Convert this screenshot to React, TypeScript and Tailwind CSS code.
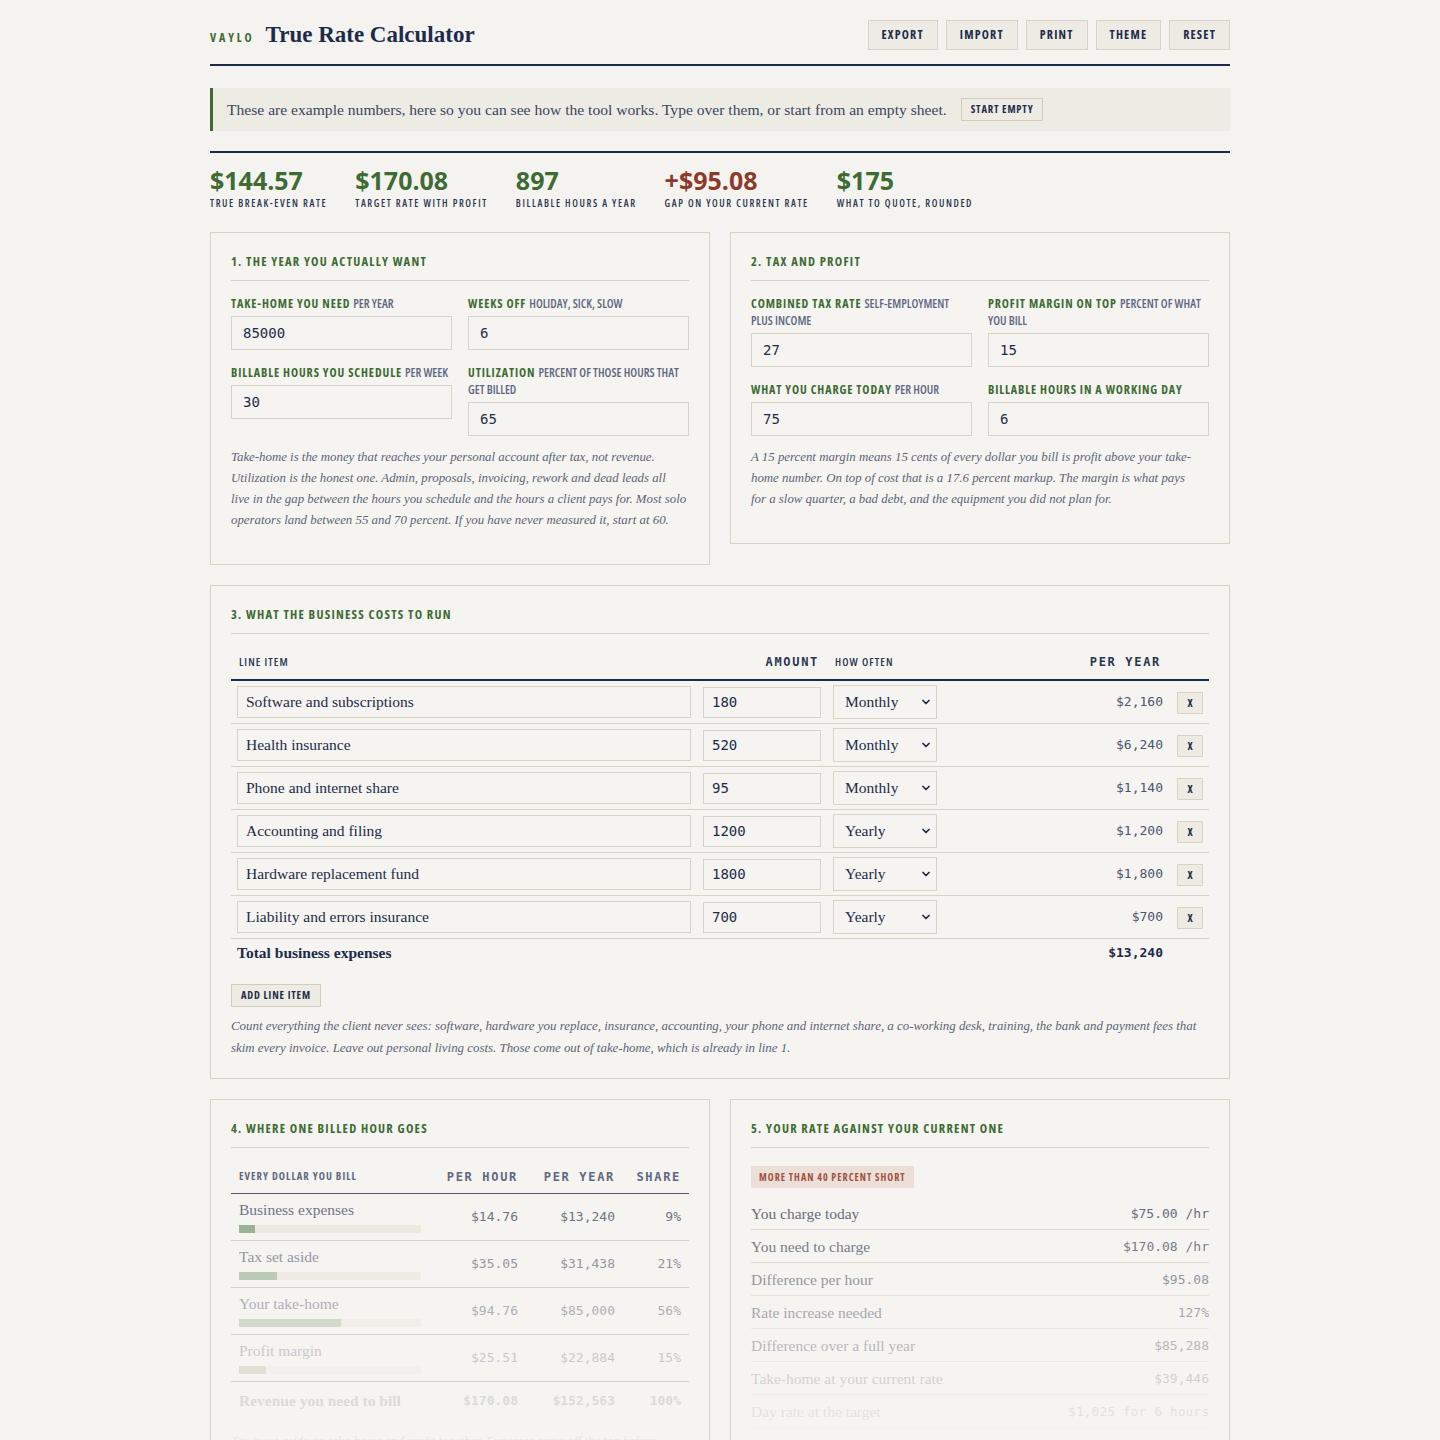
import { useState } from 'react';
import { ChevronDown } from 'lucide-react';

type Freq = 'Monthly' | 'Yearly';
type LineItem = { id: number; name: string; amount: string; freq: Freq };

const sans = "font-['Open_Sans',sans-serif] font-stretch-condensed";
const sansStat = "font-['Open_Sans',sans-serif]";
const serif = "font-['Liberation_Serif',serif]";
const mono = "font-['DejaVu_Sans_Mono',monospace]";

const startingItems: LineItem[] = [
  { id: 1, name: 'Software and subscriptions', amount: '180', freq: 'Monthly' },
  { id: 2, name: 'Health insurance', amount: '520', freq: 'Monthly' },
  { id: 3, name: 'Phone and internet share', amount: '95', freq: 'Monthly' },
  { id: 4, name: 'Accounting and filing', amount: '1200', freq: 'Yearly' },
  { id: 5, name: 'Hardware replacement fund', amount: '1800', freq: 'Yearly' },
  { id: 6, name: 'Liability and errors insurance', amount: '700', freq: 'Yearly' },
];

const stats = [
  { value: '$144.57', label: 'True break-even rate', tone: 'text-[#3e6b34]' },
  { value: '$170.08', label: 'Target rate with profit', tone: 'text-[#3e6b34]' },
  { value: '897', label: 'Billable hours a year', tone: 'text-[#3e6b34]' },
  { value: '+$95.08', label: 'Gap on your current rate', tone: 'text-[#8c3a2a]' },
  { value: '$175', label: 'What to quote, rounded', tone: 'text-[#3e6b34]' },
];

const breakdown = [
  { label: 'Business expenses', hour: '$14.76', year: '$13,240', share: 9, bar: 'bg-[#7f9c76]', fade: 'opacity-75' },
  { label: 'Tax set aside', hour: '$35.05', year: '$31,438', share: 21, bar: 'bg-[#8fab86]', fade: 'opacity-55' },
  { label: 'Your take-home', hour: '$94.76', year: '$85,000', share: 56, bar: 'bg-[#9fb896]', fade: 'opacity-40' },
  { label: 'Profit margin', hour: '$25.51', year: '$22,884', share: 15, bar: 'bg-[#a99f8a]', fade: 'opacity-25' },
];

const comparison = [
  { label: 'You charge today', value: '$75.00 /hr', fade: 'opacity-80' },
  { label: 'You need to charge', value: '$170.08 /hr', fade: 'opacity-70' },
  { label: 'Difference per hour', value: '$95.08', fade: 'opacity-55' },
  { label: 'Rate increase needed', value: '127%', fade: 'opacity-45' },
  { label: 'Difference over a full year', value: '$85,288', fade: 'opacity-35' },
  { label: 'Take-home at your current rate', value: '$39,446', fade: 'opacity-20' },
  { label: 'Day rate at the target', value: '$1,025 for 6 hours', fade: 'opacity-10' },
];

function formatMoney(n: number) {
  return '$' + n.toLocaleString('en-US');
}

function yearly(item: LineItem) {
  const amount = Number(item.amount) || 0;
  return item.freq === 'Monthly' ? amount * 12 : amount;
}

function Field({ label, hint, value }: { label: string; hint?: string; value: string }) {
  return (
    <label className="block">
      <span className={`block text-[12px] font-bold uppercase leading-[17px] tracking-[0.075em] text-[#3e6b34] ${sans}`}>
        {label}
        {hint && <span className="ml-[3px] font-semibold tracking-normal text-[#5d6782]">{hint}</span>}
      </span>
      <input
        defaultValue={value}
        className={`mt-[4px] block h-[34px] w-full border border-[#d9d3c6] bg-[#f5f4f0] px-[11px] text-[14px] text-[#1c2b4a] outline-none ${mono}`}
      />
    </label>
  );
}

function SectionTitle({ children }: { children: string }) {
  return (
    <h2 className={`border-b border-[#d9d3c6] pb-[10px] text-[12.5px] font-bold uppercase leading-[17px] tracking-[0.1em] text-[#3e6b34] ${sans}`}>
      {children}
    </h2>
  );
}

function SmallButton({ children, onClick }: { children: string; onClick?: () => void }) {
  return (
    <button
      type="button"
      onClick={onClick}
      className={`h-[23px] border border-[#d3ccbd] bg-[#edebe3] px-[9px] text-[10.5px] font-bold uppercase tracking-[0.08em] text-[#1c2b4a] ${sans}`}
    >
      {children}
    </button>
  );
}

export default function App() {
  const [items, setItems] = useState<LineItem[]>(startingItems);
  const total = items.reduce((sum, item) => sum + yearly(item), 0);

  const updateItem = (id: number, patch: Partial<LineItem>) => {
    setItems((current) => current.map((item) => (item.id === id ? { ...item, ...patch } : item)));
  };

  return (
    <div className={`min-h-screen bg-[#f4f3ef] pb-10 text-[#1c2b4a] ${serif}`}>
      <div className="mx-auto w-[1020px]">
        <header className="flex items-center justify-between border-b-2 border-[#1c2b4a] pb-[14px] pt-5">
          <div className="flex items-baseline gap-[11px]">
            <span className={`text-[12px] font-bold tracking-[0.24em] text-[#3e6b34] ${sans}`}>VAYLO</span>
            <h1 className="text-[23px] font-bold leading-[30px] text-[#1c2b4a]">True Rate Calculator</h1>
          </div>
          <div className="flex gap-2">
            {['Export', 'Import', 'Print', 'Theme', 'Reset'].map((label) => (
              <button
                key={label}
                type="button"
                className={`h-[30px] border border-[#d9d3c6] bg-[#edebe3] px-[13px] text-[12px] font-bold uppercase leading-none tracking-[0.1em] text-[#1c2b4a] ${sans}`}
                onClick={label === 'Reset' ? () => setItems(startingItems) : undefined}
              >
                {label}
              </button>
            ))}
          </div>
        </header>

        <div className="mt-[22px] flex h-[43px] items-center gap-[14px] border-l-[3px] border-[#3e6b34] bg-[#ecebe4] pl-[14px]">
          <p className="text-[15.6px] text-[#3a4660]">
            These are example numbers, here so you can see how the tool works. Type over them, or start from an empty sheet.
          </p>
          <SmallButton onClick={() => setItems([])}>Start empty</SmallButton>
        </div>

        <div className="mt-5 flex gap-7 border-t-2 border-[#1c2b4a] pt-[12px]">
          {stats.map((stat) => (
            <div key={stat.label}>
              <div className={`text-[25px] font-bold leading-[30px] ${stat.tone} ${sansStat}`}>{stat.value}</div>
              <div className={`mt-[1px] text-[10px] font-semibold uppercase tracking-[0.16em] text-[#2a3550] ${sans}`}>{stat.label}</div>
            </div>
          ))}
        </div>

        <div className="mt-[21px] grid grid-cols-2 items-start gap-5">
          <section className="border border-[#d9d3c6] bg-[#f5f4f0] px-5 pb-[33px] pt-5">
            <SectionTitle>1. The year you actually want</SectionTitle>
            <div className="mt-[14px] grid grid-cols-2 gap-x-4 gap-y-[14px]">
              <Field label="Take-home you need" hint="per year" value="85000" />
              <Field label="Weeks off" hint="holiday, sick, slow" value="6" />
              <Field label="Billable hours you schedule" hint="per week" value="30" />
              <Field label="Utilization" hint="percent of those hours that get billed" value="65" />
            </div>
            <p className="mt-[11px] text-[12.85px] italic leading-[21px] text-[#5b6478]">
              Take-home is the money that reaches your personal account after tax, not revenue. Utilization is the honest one. Admin, proposals, invoicing, rework and dead leads all
              <br />
              live in the gap between the hours you schedule and the hours a client pays for. Most solo operators land between 55 and 70 percent. If you have never measured it, start at 60.
            </p>
          </section>

          <section className="border border-[#d9d3c6] bg-[#f5f4f0] px-5 pb-[33px] pt-5">
            <SectionTitle>2. Tax and profit</SectionTitle>
            <div className="mt-[14px] grid grid-cols-2 gap-x-4 gap-y-[14px]">
              <Field label="Combined tax rate" hint="self-employment plus income" value="27" />
              <Field label="Profit margin on top" hint="percent of what you bill" value="15" />
              <Field label="What you charge today" hint="per hour" value="75" />
              <Field label="Billable hours in a working day" value="6" />
            </div>
            <p className="mt-[11px] max-w-[448px] text-[12.85px] italic leading-[21px] text-[#5b6478]">
              A 15 percent margin means 15 cents of every dollar you bill is profit above your take-home number. On top of cost that is a 17.6 percent markup. The margin is what pays for a slow quarter, a bad debt, and the equipment you did not plan for.
            </p>
          </section>
        </div>

        <section className="mt-5 border border-[#d9d3c6] bg-[#f5f4f0] px-5 pb-[19px] pt-5">
          <SectionTitle>3. What the business costs to run</SectionTitle>
          <table className="mt-[11px] w-full table-fixed border-collapse">
            <thead>
              <tr className="border-b-2 border-[#1c2b4a]">
                <th className={`h-[35px] w-[466px] px-2 text-left text-[11px] font-semibold uppercase tracking-[0.1em] text-[#2a3550] ${sans}`}>Line item</th>
                <th className={`w-[130px] px-2 text-right text-[12px] font-bold uppercase tracking-[0.14em] text-[#2a3550] ${mono}`}>Amount</th>
                <th className={`w-[116px] px-2 text-left text-[11px] font-semibold uppercase tracking-[0.1em] text-[#2a3550] ${sans}`}>How often</th>
                <th className={`px-2 text-right text-[12px] font-bold uppercase tracking-[0.14em] text-[#2a3550] ${mono}`}>Per year</th>
                <th className="w-10" />
              </tr>
            </thead>
            <tbody>
              {items.map((item) => (
                <tr key={item.id} className="border-b border-[#d9d3c6]">
                  <td className="px-[6px] py-1">
                    <input
                      value={item.name}
                      onChange={(e) => updateItem(item.id, { name: e.target.value })}
                      className="block h-[32px] w-full border border-[#d9d3c6] bg-[#f5f4f0] px-2 text-[15.5px] text-[#1c2b4a] outline-none"
                    />
                  </td>
                  <td className="px-[6px] py-1">
                    <input
                      value={item.amount}
                      onChange={(e) => updateItem(item.id, { amount: e.target.value })}
                      className={`block h-[31px] w-full border border-[#d9d3c6] bg-[#f5f4f0] px-2 text-[14px] text-[#1c2b4a] outline-none ${mono}`}
                    />
                  </td>
                  <td className="px-[6px] py-1">
                    <div className="relative">
                      <select
                        value={item.freq}
                        onChange={(e) => updateItem(item.id, { freq: e.target.value as Freq })}
                        className="block h-[34px] w-full appearance-none border border-[#d9d3c6] bg-[#f5f4f0] pl-[11px] text-[15.5px] text-[#1c2b4a] outline-none"
                      >
                        <option>Monthly</option>
                        <option>Yearly</option>
                      </select>
                      <ChevronDown size={12} strokeWidth={3.5} className="pointer-events-none absolute right-[5px] top-[11px] text-[#1c2b4a]" />
                    </div>
                  </td>
                  <td className={`px-[6px] py-1 text-right text-[13px] text-[#4b5570] ${mono}`}>{formatMoney(yearly(item))}</td>
                  <td className="py-1 pl-2">
                    <button
                      type="button"
                      onClick={() => setItems((current) => current.filter((row) => row.id !== item.id))}
                      className={`h-[22px] w-[26px] border border-[#d9d3c6] bg-[#edebe3] text-[11px] font-bold text-[#1c2b4a] ${sans}`}
                    >
                      X
                    </button>
                  </td>
                </tr>
              ))}
              <tr>
                <td className="px-[6px] pb-1 pt-[2px] text-[15.5px] font-bold text-[#1c2b4a]">Total business expenses</td>
                <td />
                <td />
                <td className={`px-[6px] pb-1 pt-[2px] text-right text-[13px] font-bold text-[#1c2b4a] ${mono}`}>{formatMoney(total)}</td>
                <td />
              </tr>
            </tbody>
          </table>
          <div className="mt-4 flex">
            <SmallButton
              onClick={() =>
                setItems((current) => [...current, { id: Date.now(), name: '', amount: '0', freq: 'Monthly' }])
              }
            >
              Add line item
            </SmallButton>
          </div>
          <p className="mt-2 text-[12.9px] italic leading-[22px] text-[#5b6478]">
            Count everything the client never sees: software, hardware you replace, insurance, accounting, your phone and internet share, a co-working desk, training, the bank and payment fees that skim every invoice. Leave out personal living costs. Those come out of take-home, which is already in line 1.
          </p>
        </section>

        <div className="mt-5 grid grid-cols-2 items-start gap-5">
          <section className="border border-[#d9d3c6] bg-[#f5f4f0] p-5">
            <SectionTitle>4. Where one billed hour goes</SectionTitle>
            <table className="mt-3 w-full table-fixed border-collapse">
              <thead>
                <tr className="border-b border-[#4a5877] text-[#5f6880]">
                  <th className={`h-[33px] w-[200px] px-2 text-left text-[10.5px] font-bold uppercase tracking-[0.1em] ${sans}`}>Every dollar you bill</th>
                  <th className={`w-[95px] px-2 text-right text-[12px] font-bold uppercase tracking-[0.14em] ${mono}`}>Per hour</th>
                  <th className={`w-[97px] px-2 text-right text-[12px] font-bold uppercase tracking-[0.14em] ${mono}`}>Per year</th>
                  <th className={`px-2 text-right text-[12px] font-bold uppercase tracking-[0.14em] ${mono}`}>Share</th>
                </tr>
              </thead>
              <tbody>
                {breakdown.map((row) => (
                  <tr key={row.label} className={`border-b border-[#d9d3c6] text-[#3f4a63] ${row.fade}`}>
                    <td className="px-2 pb-[7px] pt-[6px]">
                      <div className="text-[15.5px] leading-[20px]">{row.label}</div>
                      <div className="mt-[5px] h-2 w-[182px] bg-[#e9e6dd]">
                        <div className={`h-2 ${row.bar}`} style={{ width: `${row.share}%` }} />
                      </div>
                    </td>
                    <td className={`px-2 text-right text-[13px] ${mono}`}>{row.hour}</td>
                    <td className={`px-2 text-right text-[13px] ${mono}`}>{row.year}</td>
                    <td className={`px-2 text-right text-[13px] ${mono}`}>{row.share}%</td>
                  </tr>
                ))}
                <tr className="text-[#3f4a63] opacity-15">
                  <td className="px-2 py-[7px] text-[15.5px] font-bold">Revenue you need to bill</td>
                  <td className={`px-2 text-right text-[13px] font-bold ${mono}`}>$170.08</td>
                  <td className={`px-2 text-right text-[13px] font-bold ${mono}`}>$152,563</td>
                  <td className={`px-2 text-right text-[13px] font-bold ${mono}`}>100%</td>
                </tr>
              </tbody>
            </table>
            <p className="mt-3 text-[12.85px] italic leading-[21px] text-[#5b6478] opacity-10">
              Tax is set aside on take-home and profit together. Expenses come off the top before anything else.
            </p>
          </section>

          <section className="border border-[#d9d3c6] bg-[#f5f4f0] p-5">
            <SectionTitle>5. Your rate against your current one</SectionTitle>
            <div
              className={`mt-[18px] inline-flex h-[22px] items-center bg-[#ecdfd8] px-[8px] text-[10px] font-bold uppercase tracking-[0.1em] text-[#a0503f] ${sans}`}
            >
              More than 40 percent short
            </div>
            <div className="mt-[9px]">
              {comparison.map((row) => (
                <div
                  key={row.label}
                  className={`flex h-[33px] items-center justify-between border-b border-[#d9d3c6] text-[#3f4a63] ${row.fade}`}
                >
                  <span className="text-[15.5px]">{row.label}</span>
                  <span className={`text-[13px] ${mono}`}>{row.value}</span>
                </div>
              ))}
            </div>
          </section>
        </div>
      </div>
    </div>
  );
}
